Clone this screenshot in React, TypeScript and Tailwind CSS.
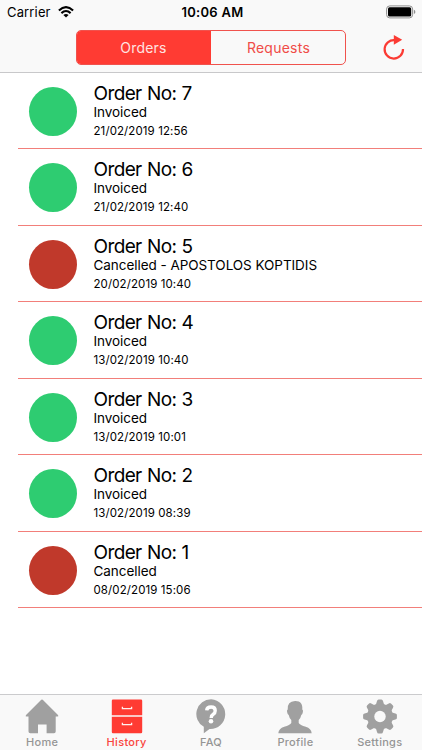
import React from "react";

type Order = { no: number; status: string; date: string; ok: boolean };

const orders: Order[] = [
  { no: 7, status: "Invoiced", date: "21/02/2019 12:56", ok: true },
  { no: 6, status: "Invoiced", date: "21/02/2019 12:40", ok: true },
  { no: 5, status: "Cancelled - APOSTOLOS KOPTIDIS", date: "20/02/2019 10:40", ok: false },
  { no: 4, status: "Invoiced", date: "13/02/2019 10:40", ok: true },
  { no: 3, status: "Invoiced", date: "13/02/2019 10:01", ok: true },
  { no: 2, status: "Invoiced", date: "13/02/2019 08:39", ok: true },
  { no: 1, status: "Cancelled", date: "08/02/2019 15:06", ok: false },
];

function StatusBar() {
  return (
    <div className="grid h-6 grid-cols-3 items-center pl-[7px] pr-[6px] text-[13px] leading-6 text-black">
      <div className="flex items-center gap-[7px]">
        <span className="tracking-[0.15px]">Carrier</span>
        <svg width="16" height="12" viewBox="0 0 16 12" fill="none" stroke="#000" strokeWidth="2.1">
          <path d="M0.9 4.4 Q8 -2.2 15.1 4.4" />
          <path d="M3.4 7.1 Q8 2.9 12.6 7.1" />
          <path d="M8 11.6 L5.4 9 Q8 6.8 10.6 9 Z" fill="#000" stroke="none" />
        </svg>
      </div>
      <span className="pl-[2px] text-center font-semibold tracking-[0.3px]">10:06 AM</span>
      <svg className="justify-self-end" width="30" height="14" viewBox="0 0 30 14">
        <rect x="0.6" y="0.9" width="26" height="12" rx="3.2" fill="none" stroke="#8e8e8e" />
        <rect x="2" y="2.3" width="23.2" height="9.2" rx="1.6" />
        <path d="M27.9 4.8 Q29.4 5.4 29.4 6.9 Q29.4 8.4 27.9 9 Z" fill="#8e8e8e" />
      </svg>
    </div>
  );
}

function NavBar() {
  return (
    <div className="flex h-12 items-start pl-[76px] pt-[6px] text-[14px] text-[#ff3b33]">
      <div className="flex h-[35px] w-[270px] overflow-hidden rounded-[5px] border border-[#f0524d]">
        <div className="flex w-[134px] items-center justify-center bg-[#ff3b33] pr-px tracking-[0.2px] text-[#ffe3e1]">Orders</div>
        <div className="flex flex-1 items-center justify-center pl-px tracking-[0.25px] text-[#f04c47]">Requests</div>
      </div>
      <svg className="ml-[36px] mt-[4px]" width="24" height="28" viewBox="0 0 24 28">
        <path d="M12.8 6.2 A9.2 9.2 0 1 0 21 15" fill="none" stroke="#fb3b34" strokeWidth="2.2" />
        <path d="M11.8 1 L20.2 5.7 L11.8 10.7 Z" fill="#fb3b34" />
      </svg>
    </div>
  );
}

function OrderRow({ order }: { order: Order }) {
  return (
    <li className="ml-[18px] flex h-[76px] flex-col even:h-[77px]">
      <div className="flex flex-1 pl-[11px]">
        <div className={`mt-[13.8px] h-[49px] w-[48px] shrink-0 rounded-[50%] ${order.ok ? "bg-[#2ecc71]" : "bg-[#c0392b]"}`} />
        <div className="ml-[16.5px] mt-[9px] whitespace-nowrap text-black">
          <div className="text-[19px] leading-[23px] tracking-[-0.62px] [word-spacing:0.6px]">Order No: {order.no}</div>
          <div className="text-[13.5px] leading-[14px] tracking-[-0.05px]">{order.status}</div>
          <div className="mt-[4px] text-[11.5px] leading-[16px] tracking-[0.1px]">{order.date}</div>
        </div>
      </div>
      <div className="h-px bg-[#f27f7a]" />
    </li>
  );
}

const HomeIcon = (
  <svg width="34" height="35" viewBox="0 0 34 35" fill="#a0a0a0">
    <path d="M17 .6 Q17.7 .6 18.5 1.5 L33 16 Q34 17.6 32.4 17.6 H30.7 V32.5 Q30.7 34.3 29 34.3 H21.6 V25.5 H13 V34.3 H5.3 Q3.5 34.3 3.5 32.5 V17.6 H1.5 Q0 17.6 1 16 L15.5 1.5 Q16.3 .6 17 .6Z" />
  </svg>
);
const HistoryIcon = (
  <svg width="34" height="35" viewBox="0 0 34 35">
    <path d="M3 .5 H31 Q32.2 .5 32.2 1.7 V16.2 H1.8 V1.7 Q1.8 .5 3 .5Z M1.8 17.8 H32.2 V33 Q32.2 34.2 31 34.2 H3 Q1.8 34.2 1.8 33Z" fill="#ff3b33" />
    <path d="M12.4 7.7 V9.6 H21.6 V7.7 M12.4 23.7 V25.6 H21.6 V23.7" fill="none" stroke="#fff0ef" strokeWidth="1.3" />
  </svg>
);
const FaqIcon = (
  <svg width="34" height="35" viewBox="0 0 34 35">
    <path d="M17.2 .3 A14.7 14.7 0 1 1 15.5 30 L9.8 34.3 V27.8 A14.7 14.7 0 0 1 17.2 .3Z" fill="#a0a0a0" />
    <path d="M12.7 11.4 Q12.9 8 17.1 8 Q21.2 8 21.2 11.7 Q21.2 14 19.2 15.3 Q17.2 16.5 17.2 19" fill="none" stroke="#fff" strokeWidth="3.4" />
    <circle cx="17" cy="22.3" r="2.3" fill="#fff" />
  </svg>
);
const ProfileIcon = (
  <svg width="34" height="35" viewBox="0 0 34 35" fill="#a0a0a0">
    <path d="M17 2 C22.5 1.8 24.8 5 24.3 10.5 Q25.4 11 24.9 13.1 Q24.5 15.6 23.3 16 Q22.6 19.4 20.7 21 V24 Q22 26.3 27.8 27.8 Q33.2 29.5 33.7 34.3 H.3 Q.8 29.5 6.2 27.8 Q12 26.3 13.3 24 V21 Q11.4 19.4 10.7 16 Q9.5 15.6 9.1 13.1 Q8.6 11 9.7 10.5 Q9.2 2.3 17 2Z" />
  </svg>
);
const SettingsIcon = (
  <svg width="34" height="35" viewBox="0 0 34 35">
    <g fill="#a0a0a0">
      <circle cx="17" cy="17.5" r="13" />
      {[0, 45, 90, 135, 180, 225, 270, 315].map((a) => (
        <path key={a} transform={`rotate(${a} 17 17.5)`} d="M12.4 7.3 L14 2.1 Q14.4 .6 15.6 .6 H18.4 Q19.6 .6 20 2.1 L21.6 7.3Z" />
      ))}
    </g>
    <circle cx="17" cy="17.5" r="5.7" fill="#f9f9f9" />
  </svg>
);

const tabs = [
  { label: "Home", icon: HomeIcon, active: false },
  { label: "History", icon: HistoryIcon, active: true },
  { label: "FAQ", icon: FaqIcon, active: false },
  { label: "Profile", icon: ProfileIcon, active: false },
  { label: "Settings", icon: SettingsIcon, active: false },
];

export default function App() {
  return (
    <div className="flex h-[750px] w-[422px] flex-col overflow-hidden bg-white font-['Inter',sans-serif]">
      <header className="h-[73px] shrink-0 border-b border-[#c8c8ca] bg-[#f9f9f9]">
        <StatusBar />
        <NavBar />
      </header>
      <ul className="min-h-0 flex-1">
        {orders.map((o) => (
          <OrderRow key={o.no} order={o} />
        ))}
      </ul>
      <nav className="flex h-[56px] shrink-0 border-t border-[#cbcbcd] bg-[#f9f9f9]">
        {tabs.map((t) => (
          <div key={t.label} className="flex flex-1 flex-col items-center pt-[4px]">
            {t.icon}
            <span className={`mt-[2px] text-[11px] font-medium leading-[13px] tracking-[0.3px] ${t.active ? "text-[#f9453e]" : "text-[#959595]"}`}>{t.label}</span>
          </div>
        ))}
      </nav>
    </div>
  );
}
